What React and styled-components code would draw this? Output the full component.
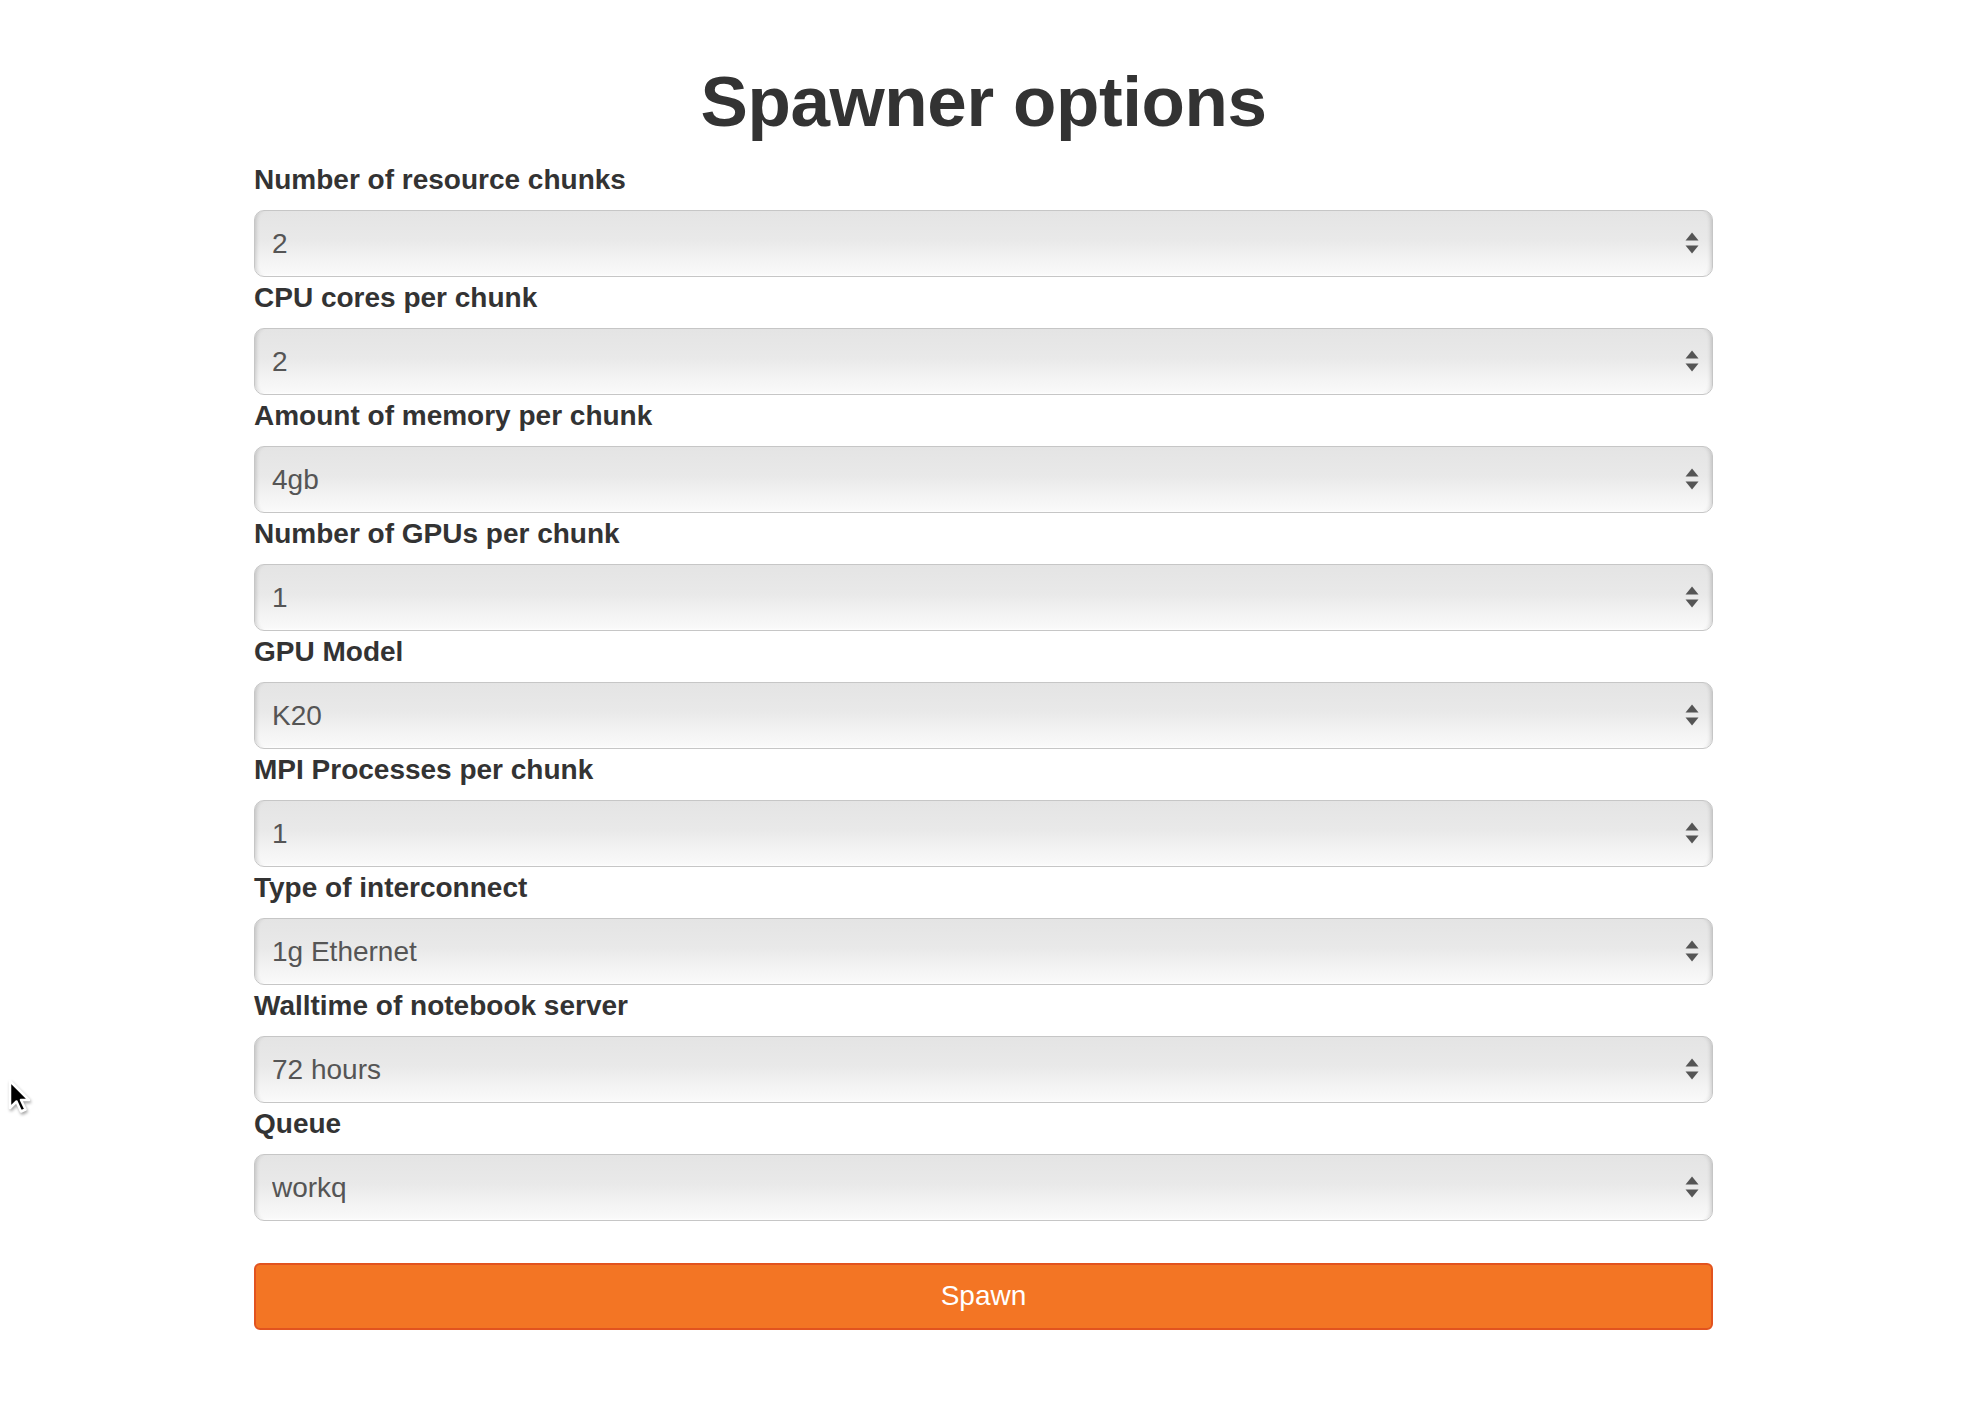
import React from 'react';
import styled, { createGlobalStyle } from 'styled-components';

const GlobalStyle = createGlobalStyle`
  html, body {
    margin: 0;
    padding: 0;
    background: #fff;
  }
  body {
    font-family: "Liberation Sans", Arial, Helvetica, sans-serif;
    color: #333;
  }
`;

const Page = styled.div`
  position: relative;
  min-height: 1423px;
  padding-top: 63px;
  box-sizing: border-box;
`;

const Form = styled.form`
  width: 1459px;
  margin: 0 0 0 254px;
`;

const Title = styled.h1`
  margin: 0 0 19px;
  text-align: center;
  font-size: 71px;
  line-height: 1.1;
  font-weight: 700;
  color: #333;
  letter-spacing: -0.4px;
`;

const Group = styled.div`
  margin-bottom: 1.5px;
`;

const Label = styled.label`
  display: block;
  font-size: 28px;
  line-height: 40px;
  font-weight: 700;
  color: #333;
  margin-bottom: 9.5px;
`;

const SelectWrap = styled.div`
  position: relative;
`;

const Select = styled.select`
  appearance: none;
  -webkit-appearance: none;
  display: block;
  width: 100%;
  height: 67px;
  box-sizing: border-box;
  padding: 0 50px 0 17px;
  font-family: "Liberation Sans", Arial, Helvetica, sans-serif;
  font-size: 28px;
  color: #555;
  border: 1.5px solid #c6c6c6;
  border-radius: 10px;
  background: linear-gradient(#e4e4e4 0%, #e9e9e9 45%, #f3f3f3 75%, #fafafa 100%);
  box-shadow: inset 5px 0 4px -4px rgba(0, 0, 0, 0.18),
    inset -5px 0 4px -4px rgba(0, 0, 0, 0.18),
    inset 0 -2px 2px -1px rgba(255, 255, 255, 0.9);
  outline: none;
`;

const Arrows = styled.svg`
  position: absolute;
  right: 13px;
  top: 50%;
  transform: translateY(-50%);
  pointer-events: none;
`;

const SpawnButton = styled.button`
  display: block;
  width: 100%;
  height: 67px;
  margin-top: 42px;
  font-family: "Liberation Sans", Arial, Helvetica, sans-serif;
  font-size: 28px;
  color: #fff;
  background: #f37524;
  border: 2px solid #e2531f;
  border-radius: 6px;
  cursor: pointer;
`;

const Cursor = styled.svg`
  position: absolute;
  left: 6px;
  top: 1078px;
  filter: drop-shadow(1px 2px 1.5px rgba(0, 0, 0, 0.35));
`;

const fields = [
  ['Number of resource chunks', '2'],
  ['CPU cores per chunk', '2'],
  ['Amount of memory per chunk', '4gb'],
  ['Number of GPUs per chunk', '1'],
  ['GPU Model', 'K20'],
  ['MPI Processes per chunk', '1'],
  ['Type of interconnect', '1g Ethernet'],
  ['Walltime of notebook server', '72 hours'],
  ['Queue', 'workq'],
];

function Field({ label, value }) {
  return (
    <Group>
      <Label>{label}</Label>
      <SelectWrap>
        <Select defaultValue={value}>
          <option value={value}>{value}</option>
        </Select>
        <Arrows width="16" height="24" viewBox="0 0 16 24">
          <path d="M8 1.5 L14.5 9.5 L1.5 9.5 Z" fill="#555" />
          <path d="M1.5 14.5 L14.5 14.5 L8 22.5 Z" fill="#555" />
        </Arrows>
      </SelectWrap>
    </Group>
  );
}

export default function App() {
  return (
    <Page>
      <GlobalStyle />
      <Form onSubmit={e => e.preventDefault()}>
        <Title>Spawner options</Title>
        {fields.map(([label, value]) => (
          <Field key={label} label={label} value={value} />
        ))}
        <SpawnButton type="submit">Spawn</SpawnButton>
      </Form>
      <Cursor width="28" height="40" viewBox="0 0 28 40">
        <path d="M4 3 L4 30 L10.5 23.5 L15 33.5 L19.5 31.5 L15 22 L23 22 Z" fill="#000" stroke="#fff" strokeWidth="2.5" strokeLinejoin="round" />
      </Cursor>
    </Page>
  );
}
